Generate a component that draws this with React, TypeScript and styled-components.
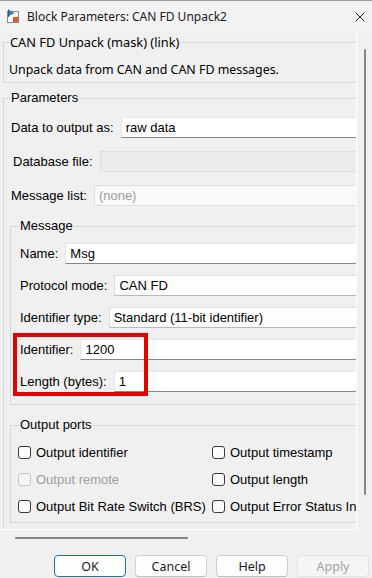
import React from 'react';
import styled, { createGlobalStyle } from 'styled-components';

const GlobalStyle = createGlobalStyle`
  html, body {
    margin: 0;
    padding: 0;
    background: #f0f0f0;
  }
  body {
    width: 372px;
    height: 578px;
    overflow: hidden;
  }
`;

const Window = styled.div`
  width: 372px;
  height: 578px;
  box-sizing: border-box;
  display: flex;
  flex-direction: column;
  background: #f0f0f0;
  border-top: 1px solid #9c9c9c;
  overflow: hidden;
  font-family: "Liberation Sans", Arial, sans-serif;
  font-size: 13px;
  color: #000;
`;

const TitleBar = styled.div`
  height: 31px;
  flex: none;
  display: flex;
  align-items: center;
  gap: 7px;
  padding: 0 7px 0 6px;
  background: #f3f3f3;
`;

const Title = styled.div`
  flex: 1;
  font-family: "Noto Sans", sans-serif;
  font-size: 12px;
  color: #1b1b1b;
  white-space: nowrap;
`;

const Middle = styled.div`
  height: 514px;
  flex: none;
  display: flex;
`;

const ViewColumn = styled.div`
  width: 357px;
  display: flex;
  flex-direction: column;
`;

const ScrollView = styled.div`
  height: 498px;
  box-sizing: border-box;
  border-right: 1px solid #fff;
  border-bottom: 1px solid #fff;
  overflow: hidden;
`;

const Content = styled.div`
  width: 440px;
  padding-top: 3px;
  display: flex;
  flex-direction: column;
`;

const HScroll = styled.div`
  height: 16px;
  padding: 7px 0 0 15px;
  box-sizing: border-box;
`;

const HThumb = styled.div`
  width: 173px;
  height: 2px;
  border-radius: 1px;
  background: #858585;
`;

const VScroll = styled.div`
  width: 15px;
  padding: 17px 0 0 7px;
  box-sizing: border-box;
`;

const VThumb = styled.div`
  width: 2px;
  height: 446px;
  border-radius: 1px;
  background: #858585;
`;

const Group = styled.fieldset<{ $left: number; $pad: string; $gap?: number }>`
  margin: 0 0 0 ${(p) => p.$left}px;
  padding: ${(p) => p.$pad};
  border: 1px solid #d7d7d7;
  min-width: 0;
  display: flex;
  flex-direction: column;
  gap: ${(p) => p.$gap ?? 0}px;
`;

const Legend = styled.legend<{ $segoe?: boolean; $shift?: number }>`
  padding: 0 1px;
  margin-left: ${(p) => p.$shift ?? 0}px;
  line-height: 14px;
  font-family: ${(p) => (p.$segoe ? '"Noto Sans", sans-serif' : '"Liberation Sans", Arial, sans-serif')};
  font-size: ${(p) => (p.$segoe ? 12.8 : 13)}px;
  color: #000;
  white-space: nowrap;
`;

const Description = styled.div`
  font-family: "Noto Sans", sans-serif;
  font-size: 12.4px;
  line-height: 17px;
  color: #000;
  white-space: nowrap;
`;

const Spacer = styled.div<{ $h: number }>`
  height: ${(p) => p.$h}px;
  flex: none;
`;

const Row = styled.div<{ $indent?: number }>`
  height: 21px;
  display: flex;
  align-items: center;
  gap: 7px;
  padding-left: ${(p) => p.$indent ?? 0}px;
`;

const Label = styled.span`
  white-space: nowrap;
`;

type FieldKind = 'edit' | 'combo' | 'disabled' | 'disabledCombo';

const Field = styled.div<{ $kind: FieldKind }>`
  flex: 1;
  height: 21px;
  box-sizing: border-box;
  padding: 0 4px;
  line-height: 19px;
  white-space: nowrap;
  color: ${(p) => (p.$kind === 'disabledCombo' ? '#9d9d9d' : '#000')};
  background: ${(p) =>
    p.$kind === 'edit'
      ? '#ffffff'
      : p.$kind === 'combo'
      ? '#fdfdfd'
      : p.$kind === 'disabled'
      ? '#ececec'
      : '#f9f9f9'};
  border: 1px solid
    ${(p) => (p.$kind === 'edit' ? '#e6e6e6' : p.$kind === 'combo' ? '#dcdcdc' : '#dedede')};
  border-bottom-color: ${(p) =>
    p.$kind === 'edit' ? '#868686' : p.$kind === 'combo' ? '#b9b9b9' : '#dedede'};
`;

const Highlighted = styled.div`
  position: relative;
  display: flex;
  flex-direction: column;
  gap: 11px;
`;

const RedBox = styled.div`
  position: absolute;
  left: -7px;
  top: -6px;
  width: 135px;
  height: 63px;
  box-sizing: border-box;
  border: 4px solid #e60000;
  pointer-events: none;
`;

const CheckGrid = styled.div`
  display: grid;
  grid-template-columns: 194px auto;
  row-gap: 9px;
`;

const Check = styled.div<{ $disabled?: boolean }>`
  height: 18px;
  display: flex;
  align-items: center;
  gap: 5px;
  white-space: nowrap;
  color: ${(p) => (p.$disabled ? '#9d9d9d' : '#000')};
`;

const Box = styled.span<{ $disabled?: boolean }>`
  width: 13px;
  height: 13px;
  box-sizing: border-box;
  flex: none;
  border-radius: 3px;
  border: 1px solid ${(p) => (p.$disabled ? '#c5c5c5' : '#3a3a3a')};
  background: ${(p) => (p.$disabled ? '#f5f5f5' : '#fbfbfb')};
`;

const ButtonRow = styled.div`
  margin-top: 9px;
  display: flex;
  justify-content: flex-end;
  gap: 9px;
  padding-right: 3px;
`;

const Button = styled.div<{ $primary?: boolean; $disabled?: boolean }>`
  width: 72px;
  height: 22px;
  box-sizing: border-box;
  display: flex;
  align-items: center;
  justify-content: center;
  border-radius: 4px;
  font-family: "Noto Sans", sans-serif;
  font-size: 12.5px;
  color: ${(p) => (p.$disabled ? '#a3a3a3' : '#1b1b1b')};
  background: ${(p) => (p.$disabled ? '#f5f5f5' : '#fdfdfd')};
  border: 1px solid ${(p) => (p.$primary ? '#1a6fc2' : p.$disabled ? '#e3e3e3' : '#d0d0d0')};
  border-bottom-color: ${(p) => (p.$primary ? '#1a6fc2' : p.$disabled ? '#e3e3e3' : '#bdbdbd')};
`;

function BlockIcon() {
  return (
    <svg width="14" height="15" viewBox="0 0 14 15">
      <rect x="1.5" y="2.5" width="11" height="11" fill="#fff" stroke="#8a8a8a" />
      <path d="M2.5 0.5 V8" stroke="#4a4a4a" strokeWidth="1" />
      <path d="M3 1 L8.5 4 L3 7 Z" fill="#2b86d1" />
      <rect x="7" y="8" width="5" height="5" fill="#e4572e" />
    </svg>
  );
}

function CloseIcon() {
  return (
    <svg width="10" height="10" viewBox="0 0 10 10">
      <path d="M0.5 0.5 L9.5 9.5 M9.5 0.5 L0.5 9.5" stroke="#1b1b1b" strokeWidth="1" />
    </svg>
  );
}

function CheckItem({ label, disabled }: { label: string; disabled?: boolean }) {
  return (
    <Check $disabled={disabled}>
      <Box $disabled={disabled} />
      {label}
    </Check>
  );
}

export default function App() {
  return (
    <Window>
      <GlobalStyle />
      <TitleBar>
        <BlockIcon />
        <Title>Block Parameters: CAN FD Unpack2</Title>
        <CloseIcon />
      </TitleBar>

      <Middle>
        <ViewColumn>
          <ScrollView>
            <Content>
              <Group $left={3} $pad="12px 5px 4px">
                <Legend $segoe>CAN FD Unpack (mask) (link)</Legend>
                <Description>Unpack data from CAN and CAN FD messages.</Description>
              </Group>

              <Spacer $h={8} />

              <Group $left={3} $pad="12px 6px 20px" $gap={13}>
                <Legend>Parameters</Legend>
                <Row $indent={1}>
                  <Label>Data to output as:</Label>
                  <Field $kind="edit">raw data</Field>
                </Row>
                <Row $indent={3}>
                  <Label>Database file:</Label>
                  <Field $kind="disabled" />
                </Row>
                <Row $indent={1}>
                  <Label>Message list:</Label>
                  <Field $kind="disabledCombo">(none)</Field>
                </Row>

                <Group $left={0} $pad="10px 9px 12px" $gap={11}>
                  <Legend $shift={-1}>Message</Legend>
                  <Row>
                    <Label>Name:</Label>
                    <Field $kind="edit">Msg</Field>
                  </Row>
                  <Row>
                    <Label>Protocol mode:</Label>
                    <Field $kind="combo">CAN FD</Field>
                  </Row>
                  <Row>
                    <Label>Identifier type:</Label>
                    <Field $kind="combo">Standard (11-bit identifier)</Field>
                  </Row>
                  <Highlighted>
                    <Row>
                      <Label>Identifier:</Label>
                      <Field $kind="edit">1200</Field>
                    </Row>
                    <Row>
                      <Label>Length (bytes):</Label>
                      <Field $kind="edit">1</Field>
                    </Row>
                    <RedBox />
                  </Highlighted>
                </Group>

                <Group $left={0} $pad="11px 7px 7px">
                  <Legend $shift={1}>Output ports</Legend>
                  <CheckGrid>
                    <CheckItem label="Output identifier" />
                    <CheckItem label="Output timestamp" />
                    <CheckItem label="Output remote" disabled />
                    <CheckItem label="Output length" />
                    <CheckItem label="Output Bit Rate Switch (BRS)" />
                    <CheckItem label="Output Error Status In" />
                  </CheckGrid>
                </Group>
              </Group>
            </Content>
          </ScrollView>
          <HScroll>
            <HThumb />
          </HScroll>
        </ViewColumn>
        <VScroll>
          <VThumb />
        </VScroll>
      </Middle>

      <ButtonRow>
        <Button $primary>OK</Button>
        <Button>Cancel</Button>
        <Button>Help</Button>
        <Button $disabled>Apply</Button>
      </ButtonRow>
    </Window>
  );
}
